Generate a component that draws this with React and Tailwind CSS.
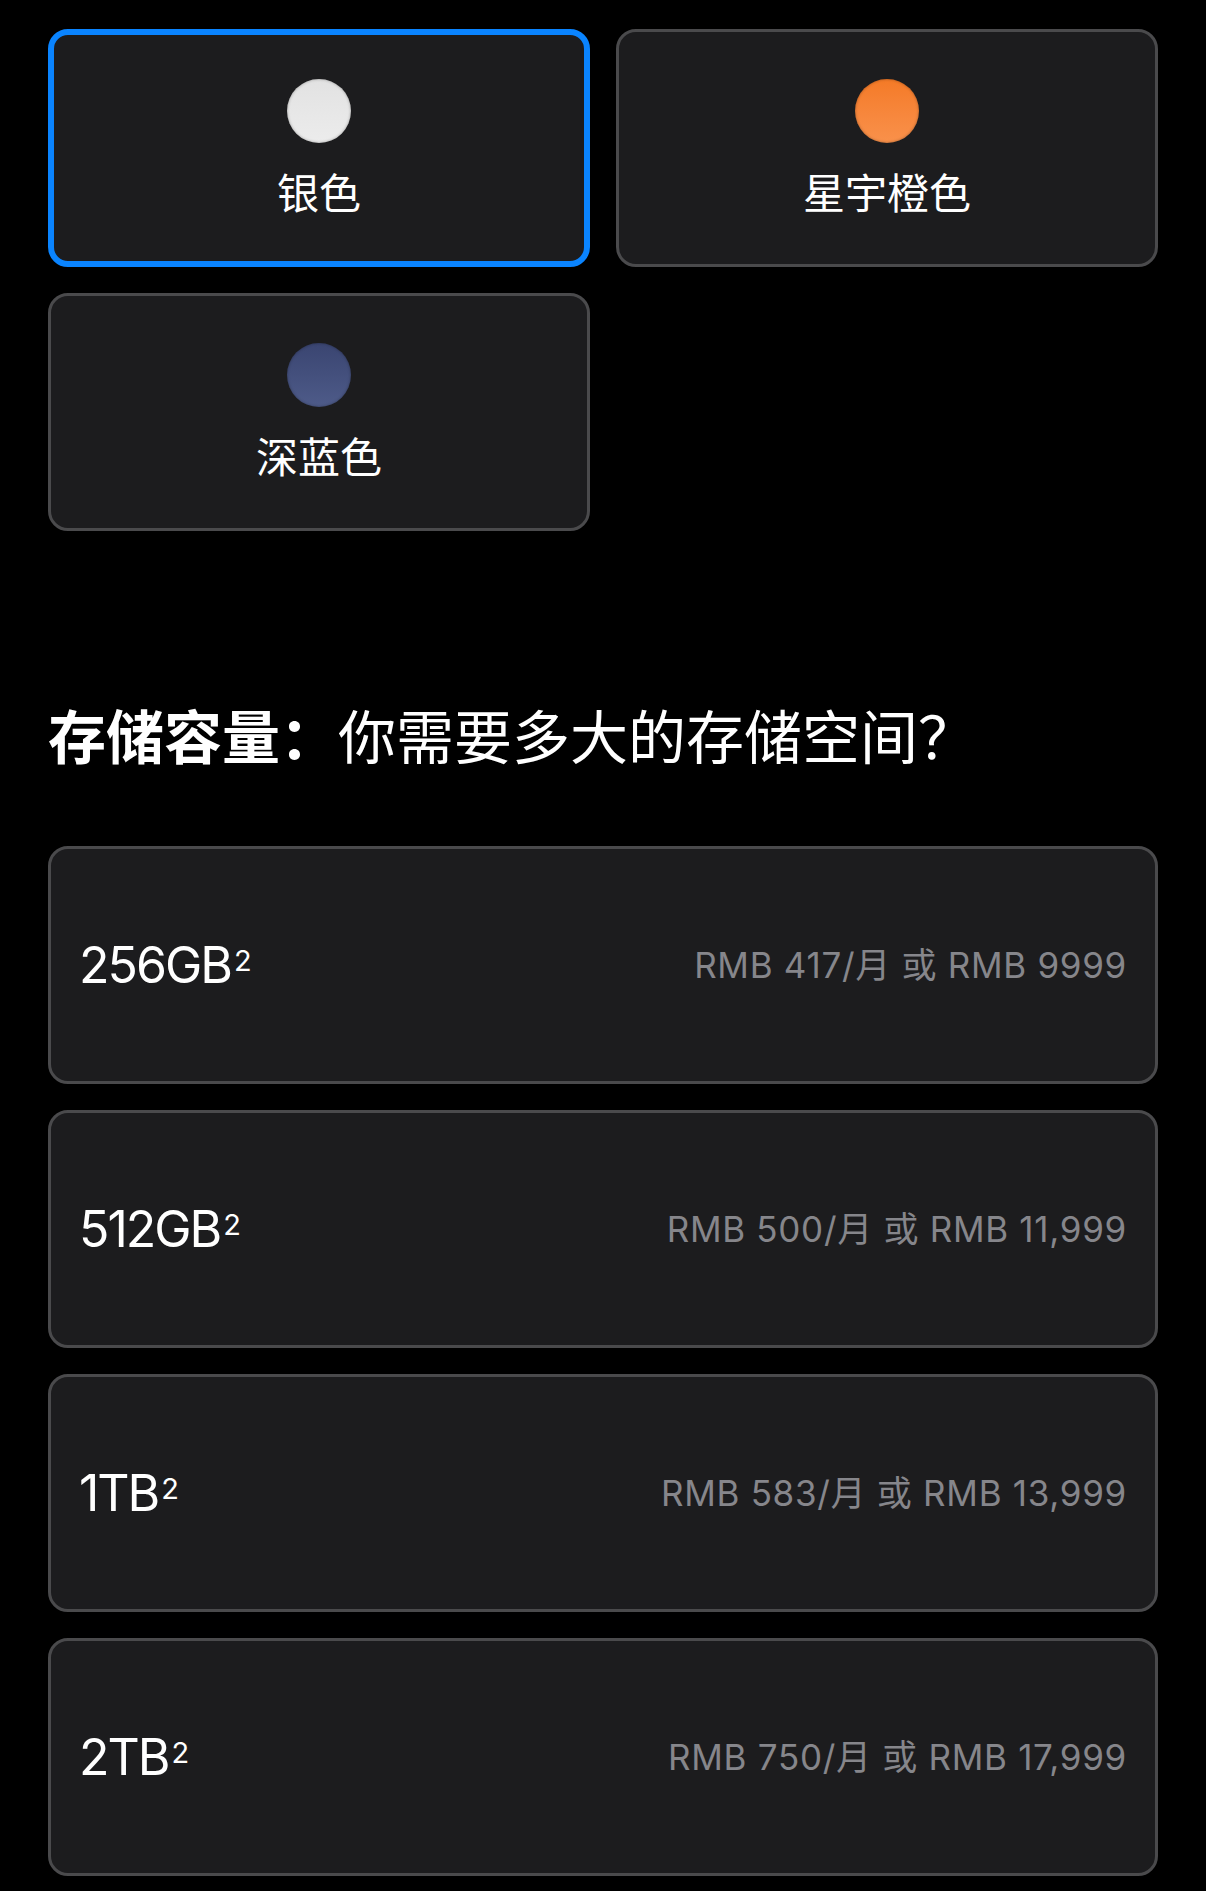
const colours = [
  { name: "银色", dot: "bg-gradient-to-b from-[#e2e2e2] to-[#ececec]", selected: true },
  { name: "星宇橙色", dot: "bg-gradient-to-b from-[#f47a26] to-[#f9914b]" },
  { name: "深蓝色", dot: "bg-gradient-to-b from-[#3a4571] to-[#4e5b89]" },
];

const storage = [
  { size: "256GB", price: "RMB 417/月 或 RMB 9999" },
  { size: "512GB", price: "RMB 500/月 或 RMB 11,999" },
  { size: "1TB", price: "RMB 583/月 或 RMB 13,999" },
  { size: "2TB", price: "RMB 750/月 或 RMB 17,999" },
];

function ColourCard({ name, dot, selected }) {
  return (
    <button
      className={
        selected
          ? "h-[238px] rounded-[20px] bg-[#1c1c1e] border-[6px] border-[#0a84ff] flex flex-col items-center justify-center gap-[27px]"
          : "h-[238px] rounded-[20px] bg-[#1c1c1e] border-[3px] border-[#4a4a4c] flex flex-col items-center justify-center gap-[27px]"
      }
    >
      <span className={`block w-16 h-16 rounded-full shadow-[inset_0_0_3px_rgba(0,0,0,0.35)] ${dot}`} />
      <span className="text-[42px] leading-[48px] text-white">{name}</span>
    </button>
  );
}

function StorageRow({ size, price }) {
  return (
    <button className="h-[238px] rounded-[20px] bg-[#1c1c1e] border-[3px] border-[#4a4a4c] flex items-center justify-between pl-[28px] pr-[28px] text-left">
      <span className="text-[50px] leading-none text-white tracking-[-0.04em]">
        {size}
        <sup className="text-[29px] tracking-normal ml-[3px] relative -top-[12px]">2</sup>
      </span>
      <span className="text-[35px] leading-none text-[#86868b] tracking-[0.02em]">{price}</span>
    </button>
  );
}

export default function App() {
  return (
    <div className="min-h-[1891px] bg-black px-12 pt-[29px] pb-4 font-[family-name:Inter,'Noto_Sans_CJK_SC',sans-serif]">
      <div className="grid grid-cols-2 gap-[26px]">
        {colours.map((c) => (
          <ColourCard key={c.name} {...c} />
        ))}
      </div>

      <h2 className="mt-[173px] mb-[74px] text-[58px] leading-[68px] text-white">
        <span className="font-semibold">存储容量：</span>
        你需要多大的存储空间？
      </h2>

      <div className="flex flex-col gap-[26px]">
        {storage.map((s) => (
          <StorageRow key={s.size} {...s} />
        ))}
      </div>
    </div>
  );
}
